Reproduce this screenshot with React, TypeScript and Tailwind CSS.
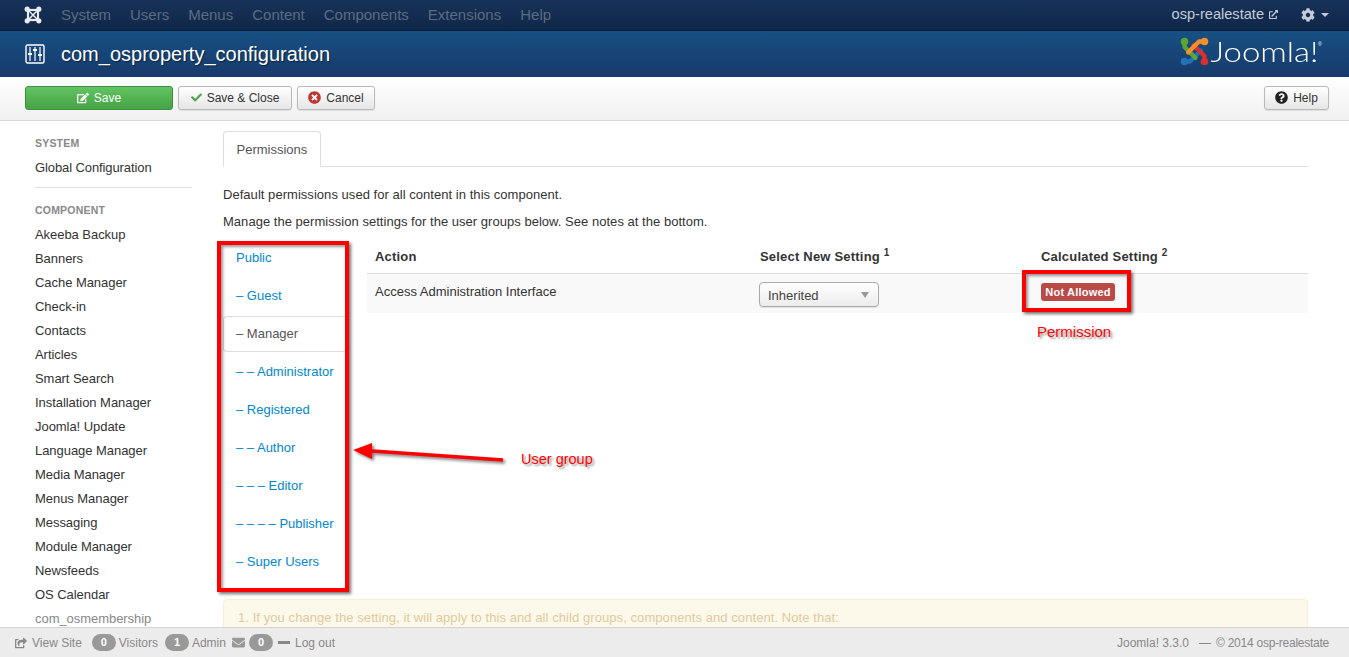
import { FaCheck, FaCog, FaEdit, FaEnvelope, FaExternalLinkAlt, FaQuestionCircle, FaShareSquare, FaTimesCircle } from "react-icons/fa";

const navItems = ["System", "Users", "Menus", "Content", "Components", "Extensions", "Help"];

const components = [
  "Akeeba Backup",
  "Banners",
  "Cache Manager",
  "Check-in",
  "Contacts",
  "Articles",
  "Smart Search",
  "Installation Manager",
  "Joomla! Update",
  "Language Manager",
  "Media Manager",
  "Menus Manager",
  "Messaging",
  "Module Manager",
  "Newsfeeds",
  "OS Calendar",
  "com_osmembership",
];

const groups = [
  { dashes: "", name: "Public" },
  { dashes: "– ", name: "Guest" },
  { dashes: "– ", name: "Manager", active: true },
  { dashes: "– – ", name: "Administrator" },
  { dashes: "– ", name: "Registered" },
  { dashes: "– – ", name: "Author" },
  { dashes: "– – – ", name: "Editor" },
  { dashes: "– – – – ", name: "Publisher" },
  { dashes: "– ", name: "Super Users" },
];

function JoomlaMark({ size }: { size: number }) {
  return (
    <svg width={size} height={size} viewBox="0 0 32 32" fill="none" strokeWidth="4.8" strokeLinecap="round" strokeLinejoin="round">
      <path d="M5 27 L11 27 L23 15" stroke="#2272b8" />
      <circle cx="5" cy="27" r="4.2" fill="#2272b8" />
      <path d="M5 5 L5 11 L17 23" stroke="#5ba532" />
      <circle cx="5" cy="5" r="4.2" fill="#5ba532" />
      <path d="M27 27 L27 21 L15 9" stroke="#d8312f" />
      <circle cx="27" cy="27" r="4.2" fill="#d8312f" />
      <path d="M27 5 L21 5 L9 17" stroke="#f4902c" />
      <circle cx="27" cy="5" r="4.2" fill="#f4902c" />
    </svg>
  );
}

// small white version in the nav bar reads as a ring with corner balls
function JoomlaMarkMono() {
  return (
    <svg width="18" height="18" viewBox="0 0 18 18" fill="#e8ebef" stroke="#e8ebef">
      <rect x="4" y="4" width="10" height="10" fill="none" strokeWidth="2.2" />
      <path d="M4 4l10 10M14 4L4 14" strokeWidth="1.6" />
      <circle cx="3.2" cy="3.2" r="2.6" stroke="none" />
      <circle cx="14.8" cy="3.2" r="2.6" stroke="none" />
      <circle cx="3.2" cy="14.8" r="2.6" stroke="none" />
      <circle cx="14.8" cy="14.8" r="2.6" stroke="none" />
    </svg>
  );
}

function SlidersIcon() {
  return (
    <svg width="20" height="20" viewBox="0 0 20 20" fill="none" stroke="white">
      <rect x="1" y="1" width="18" height="18" rx="1.5" strokeWidth="1.4" />
      <path d="M5 3v14M10 3v14M15 3v14" strokeWidth="1.2" />
      <path d="M3 10h4M8 6h4M13 11h4" strokeWidth="2" />
    </svg>
  );
}

function ToolbarButton({ children, className }: { children: React.ReactNode; className?: string }) {
  return (
    <button className={`flex h-[24px] items-center justify-center gap-[5px] rounded-[3px] border border-[#b9b9b9] bg-gradient-to-b from-white to-[#e6e6e6] text-[12px] text-[#333] shadow-[0_1px_1px_rgba(0,0,0,0.08)] ${className ?? ""}`}>
      {children}
    </button>
  );
}

function CountBadge({ n }: { n: number }) {
  return <span className="flex h-[17px] w-[24px] items-center justify-center rounded-full bg-[#999] text-[11px] font-bold text-white">{n}</span>;
}

export default function App() {
  return (
    <div className="relative flex h-[657px] w-full flex-col overflow-hidden bg-white font-['Liberation_Sans',Arial,sans-serif] text-[13px] text-[#333]">
      {/* top nav */}
      <div className="flex h-[31px] shrink-0 items-center border-b border-[#0b1c36] bg-gradient-to-b from-[#17325a] to-[#0f2748] pl-[24px] pr-[20px]">
        <JoomlaMarkMono />
        <div className="ml-[19px] flex gap-[19px] text-[15px] text-[#5d6b80]">
          {navItems.map((item) => (
            <span key={item}>{item}</span>
          ))}
        </div>
        <div className="ml-auto flex items-center text-[14.6px] text-[#c3cbd6]">
          <span>osp-realestate</span>
          <FaExternalLinkAlt className="ml-[5px] text-[9px]" />
          <FaCog className="ml-[23px] text-[14px]" />
          <span className="ml-[6px] h-0 w-0 border-x-[4px] border-t-[4px] border-x-transparent border-t-[#c3cbd6]" />
        </div>
      </div>

      {/* title bar */}
      <div className="flex h-[46px] shrink-0 items-center bg-gradient-to-b from-[#175084] to-[#173a6b] pl-[25px] pr-[26px]">
        <SlidersIcon />
        <h1 className="ml-[16px] text-[20px] leading-none text-white [text-shadow:1px_1px_1px_rgba(0,0,0,0.5)]">com_osproperty_configuration</h1>
        <div className="ml-auto flex items-center pb-[6px]">
          <JoomlaMark size={29} />
          <span className="ml-[21px] origin-right scale-x-[1.22] font-['Lato',sans-serif] text-[27px] font-light leading-none text-white">Joomla!</span>
          <span className="mb-[14px] w-[5px] text-[5px] leading-none text-white">®</span>
        </div>
      </div>

      {/* toolbar */}
      <div className="flex h-[44px] shrink-0 items-center gap-[5px] border-b border-[#d8d8d8] bg-gradient-to-b from-white to-[#f0f0f0] pb-[2px] pl-[25px] pr-[20px]">
        <button className="flex h-[24px] w-[148px] items-center justify-center gap-[5px] rounded-[3px] border border-[#3f8f3f] bg-gradient-to-b from-[#62c462] to-[#45a345] text-[12px] text-white">
          <FaEdit className="text-[12px]" />
          Save
        </button>
        <ToolbarButton className="w-[114px]">
          <FaCheck className="text-[11px] text-[#51a351]" />
          Save &amp; Close
        </ToolbarButton>
        <ToolbarButton className="w-[78px]">
          <FaTimesCircle className="text-[13px] text-[#bd362f]" />
          Cancel
        </ToolbarButton>
        <ToolbarButton className="ml-auto w-[65px]">
          <FaQuestionCircle className="text-[13px] text-[#222]" />
          Help
        </ToolbarButton>
      </div>

      <div className="flex min-h-0 flex-1">
        {/* sidebar */}
        <aside className="ml-[35px] w-[157px] shrink-0 pt-[15px]">
          <div className="text-[10.5px] font-bold leading-[14px] tracking-[0.2px] text-[#888]">SYSTEM</div>
          <div className="mt-[6px] h-[24px] leading-[24px] tracking-[-0.1px]">Global Configuration</div>
          <div className="mt-[7px] border-t border-[#ddd]" />
          <div className="mt-[15px] text-[10.5px] font-bold leading-[14px] tracking-[0.2px] text-[#888]">COMPONENT</div>
          <ul className="mt-[6px]">
            {components.map((name) => (
              <li key={name} className={`h-[24px] leading-[24px] tracking-[-0.05px] ${name === "com_osmembership" ? "text-[#888]" : ""}`}>
                {name}
              </li>
            ))}
          </ul>
        </aside>

        {/* main column */}
        <main className="ml-[31px] mr-[41px] min-w-0 flex-1 pt-[10px]">
          <div className="flex h-[36px] border-b border-[#ddd]">
            <div className="h-[36px] rounded-t-[4px] border border-b-white border-[#ddd] bg-white px-[12.5px] leading-[36px] text-[#555]">Permissions</div>
          </div>
          <p className="mt-[19px] leading-[18px] tracking-[0.04px]">Default permissions used for all content in this component.</p>
          <p className="mt-[9px] leading-[18px] tracking-[0.03px]">Manage the permission settings for the user groups below. See notes at the bottom.</p>

          <div className="mt-[8px] flex">
            <ul className="w-[123px] shrink-0">
              {groups.map((g) => (
                <li key={g.name} className="flex h-[38px] items-center">
                  {g.active ? (
                    <span className="flex h-[36px] w-full items-center rounded-l-[4px] border border-r-0 border-[#ddd] pl-[12px] text-[#555] whitespace-pre">
                      {g.dashes}
                      {g.name}
                    </span>
                  ) : (
                    <span className="pl-[13px] text-[#0088cc] whitespace-pre">
                      {g.dashes}
                      {g.name}
                    </span>
                  )}
                </li>
              ))}
            </ul>

            <div className="ml-[21px] flex-1">
              <div className="flex h-[35px] items-end border-b border-[#ddd] pb-[7px] font-bold tracking-[0.2px]">
                <div className="ml-[8px] w-[385px]">Action</div>
                <div className="w-[281px]">
                  Select New Setting <sup className="text-[10px]">1</sup>
                </div>
                <div>
                  Calculated Setting <sup className="text-[10px]">2</sup>
                </div>
              </div>
              <div className="flex h-[39px] bg-[#f9f9f9]">
                <div className="ml-[8px] w-[384px] pt-[8px]">Access Administration Interface</div>
                <div className="w-[282px] pt-[8px]">
                  <div className="flex h-[25px] w-[120px] items-center justify-between rounded-[4px] border border-[#aaa] bg-gradient-to-b from-white to-[#ececec] pl-[8px] pr-[9px] pt-[2px] text-[#444] shadow-[0_1px_1px_rgba(0,0,0,0.1)]">
                    Inherited
                    <span className="mb-[2px] h-0 w-0 border-x-[4px] border-t-[6px] border-x-transparent border-t-[#999]" />
                  </div>
                </div>
                <div className="pt-[9px]">
                  <span className="block h-[18px] w-[74px] rounded-[3px] bg-[#b94a48] text-center text-[11px] font-bold leading-[18px] tracking-[0.2px] text-white">Not Allowed</span>
                </div>
              </div>
            </div>
          </div>

          <div className="mt-[18px] h-[60px] rounded-[4px] border border-[#fbeed5] bg-[#fdf9ea] pl-[14px] pt-[8px] tracking-[0.07px] text-[#e0c9a0]">
            1. If you change the setting, it will apply to this and all child groups, components and content. Note that:
          </div>
        </main>
      </div>

      {/* status bar */}
      <div className="absolute bottom-0 left-0 right-0 flex h-[30px] items-center border-t border-[#d4d4d4] bg-[#ececec] pl-[15px] pr-[20px] text-[12px] text-[#888]">
        <FaShareSquare className="text-[12px]" />
        <span className="ml-[5px]">View Site</span>
        <span className="ml-[10px]"><CountBadge n={0} /></span>
        <span className="ml-[3px]">Visitors</span>
        <span className="ml-[7px]"><CountBadge n={1} /></span>
        <span className="ml-[3px]">Admin</span>
        <FaEnvelope className="ml-[6px] text-[13px] text-[#999]" />
        <span className="ml-[4px]"><CountBadge n={0} /></span>
        <span className="ml-[5px] h-[3px] w-[12px] bg-[#888]" />
        <span className="ml-[5px]">Log out</span>
        <span className="ml-auto">Joomla! 3.3.0</span>
        <span className="ml-[10px]">—</span>
        <span className="ml-[5px] tracking-[-0.25px]">© 2014 osp-realestate</span>
      </div>

      {/* red annotations drawn on the screenshot */}
      <div className="absolute left-[217px] top-[241px] h-[351px] w-[132px] border-4 border-[#f00] shadow-[2px_2px_3px_rgba(0,0,0,0.55),inset_2px_2px_3px_rgba(0,0,0,0.4)]" />
      <div className="absolute left-[1022px] top-[270px] h-[42px] w-[109px] border-4 border-[#f00] shadow-[2px_2px_3px_rgba(0,0,0,0.55),inset_2px_2px_3px_rgba(0,0,0,0.4)]" />
      <span className="absolute left-[1037px] top-[324px] text-[15px] leading-[16px] text-[#f00] [text-shadow:2px_2px_2px_rgba(0,0,0,0.4)]">Permission</span>
      <span className="absolute left-[521px] top-[451px] text-[14.5px] leading-[16px] text-[#f00] [text-shadow:2px_2px_2px_rgba(0,0,0,0.4)]">User group</span>
      <svg className="absolute left-[350px] top-[440px]" width="160" height="30" viewBox="0 0 160 30" fill="none">
        <g style={{ filter: "drop-shadow(2px 2px 1.5px rgba(0,0,0,0.5))" }}>
          <path d="M22 11 L153 20" stroke="#f00" strokeWidth="3.5" />
          <path d="M3 10 L22 3 L22 19 Z" fill="#f00" />
        </g>
      </svg>
    </div>
  );
}
